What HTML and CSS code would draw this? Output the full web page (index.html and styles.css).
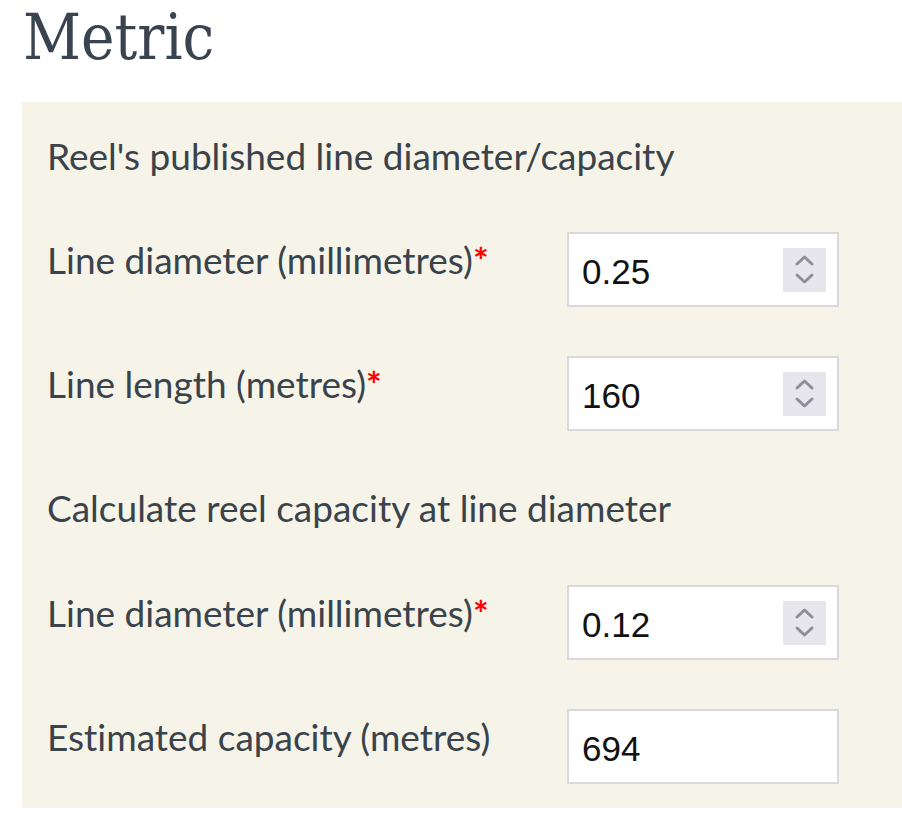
FILE: index.html
```html
<!DOCTYPE html>
<html lang="en">
<head>
<meta charset="utf-8">
<title>Metric</title>
<link rel="stylesheet" href="styles.css">
</head>
<body>
<main class="page">
  <h1 class="title">Metric</h1>
  <form class="panel">
    <h2 class="section-title">Reel's published line diameter/capacity</h2>
    <div class="row">
      <label class="label" for="d1">Line diameter (millimetres)<span class="req">*</span></label>
      <div class="field">
        <input class="value" id="d1" type="text" value="0.25">
        <span class="spin"><svg viewBox="0 0 43 44" width="43" height="44"><path d="M14 16 L21.5 9 L29 16 M14 27 L21.5 34 L29 27" fill="none" stroke="#8f8d9a" stroke-width="3" stroke-linecap="round" stroke-linejoin="round"/></svg></span>
      </div>
    </div>
    <div class="row">
      <label class="label" for="l1">Line length (metres)<span class="req">*</span></label>
      <div class="field">
        <input class="value" id="l1" type="text" value="160">
        <span class="spin"><svg viewBox="0 0 43 44" width="43" height="44"><path d="M14 16 L21.5 9 L29 16 M14 27 L21.5 34 L29 27" fill="none" stroke="#8f8d9a" stroke-width="3" stroke-linecap="round" stroke-linejoin="round"/></svg></span>
      </div>
    </div>
    <h2 class="section-title second">Calculate reel capacity at line diameter</h2>
    <div class="row">
      <label class="label" for="d2">Line diameter (millimetres)<span class="req">*</span></label>
      <div class="field">
        <input class="value" id="d2" type="text" value="0.12">
        <span class="spin"><svg viewBox="0 0 43 44" width="43" height="44"><path d="M14 16 L21.5 9 L29 16 M14 27 L21.5 34 L29 27" fill="none" stroke="#8f8d9a" stroke-width="3" stroke-linecap="round" stroke-linejoin="round"/></svg></span>
      </div>
    </div>
    <div class="row">
      <label class="label" for="c1">Estimated capacity (metres)</label>
      <div class="field">
        <input class="value" id="c1" type="text" value="694" readonly>
      </div>
    </div>
  </form>
</main>
</body>
</html>
```

FILE: styles.css
```css
html, body {
  margin: 0;
  padding: 0;
  background: #ffffff;
}

.page {
  padding-left: 22px;
  padding-top: 1px;
}

.title {
  margin: 0 0 27px 1px;
  font-family: "DejaVu Serif Condensed", "DejaVu Serif", serif;
  font-weight: normal;
  font-size: 63px;
  line-height: 74px;
  color: #3a4450;
}

.panel {
  background: #f6f4e8;
  padding: 29px 0 24px 25px;
  display: flex;
  flex-direction: column;
  font-family: Lato, "Noto Sans", sans-serif;
  font-variant-ligatures: no-common-ligatures;
  color: #3a434c;
}

.section-title {
  margin: 0 0 51px 0;
  font-size: 37px;
  font-weight: normal;
  line-height: 50px;
}

.section-title.second {
  margin-top: 3px;
  margin-bottom: 52px;
}

.row {
  display: grid;
  grid-template-columns: 520px 272px;
  align-items: start;
  margin-bottom: 49px;
}

.row:last-child {
  margin-bottom: 0;
}

.label {
  font-size: 37px;
  line-height: 50px;
  padding-top: 3px;
}

.req {
  color: #ff0000;
  font-weight: bold;
}

.field {
  box-sizing: border-box;
  height: 75px;
  border: 2px solid #d9d9d9;
  background: #ffffff;
  display: flex;
  align-items: center;
  padding: 0 11px 0 13px;
}

.value {
  flex: 1;
  min-width: 0;
  border: 0;
  outline: none;
  padding: 4px 0 0 0;
  margin: 0;
  background: transparent;
  font-family: "Liberation Sans", Arial, sans-serif;
  font-size: 35px;
  color: #111111;
}

.spin {
  width: 43px;
  height: 44px;
  background: #e7e6ec;
  display: flex;
}
```
